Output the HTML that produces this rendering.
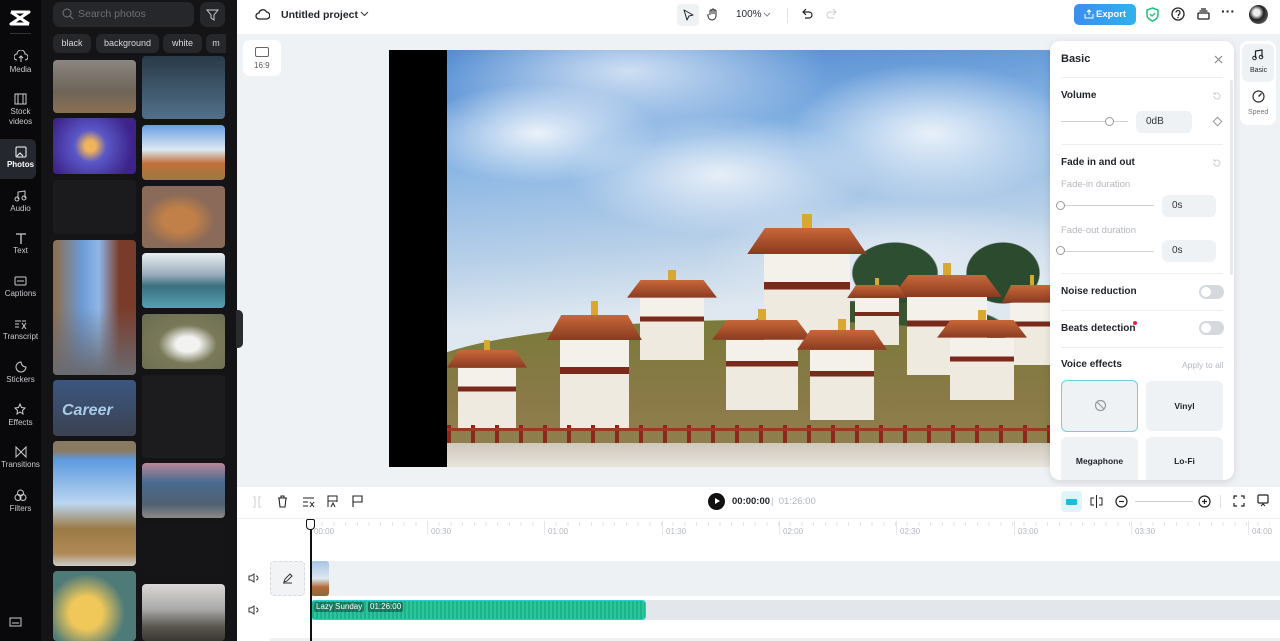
<!DOCTYPE html>
<html><head><meta charset="utf-8"><style>
*{box-sizing:border-box;margin:0;padding:0}
body{width:1280px;height:641px;overflow:hidden;font-family:"Liberation Sans",sans-serif;background:#eff2f5;position:relative;font-size:12px;color:#1f2329}
.abs{position:absolute}
.side{left:0;top:0;width:41px;height:641px;background:#09090b}
.nav{position:absolute;left:0;width:41px;text-align:center;color:#c9cbd0;font-size:8px;line-height:10px}
.nav svg{display:block;margin:0 auto 2px}
.panel{left:41px;top:0;width:196px;height:641px;background:#141417}
.th{position:absolute;border-radius:4px}
.chip{position:absolute;top:34px;height:19px;background:#26272b;border-radius:6px;color:#d8d9dc;font-size:9px;line-height:19px;text-align:center}
.top{left:237px;top:0;width:1043px;height:34px;background:#fff}
.tl{left:237px;top:487px;width:1043px;height:154px;background:#fff}
.pn{left:1050px;top:41px;width:184px;height:439px;background:#fff;border-radius:10px;box-shadow:0 2px 8px rgba(0,0,0,.12)}
.lbl{position:absolute;font-size:10px;font-weight:bold;color:#1f2329}
.sub{position:absolute;font-size:9.5px;color:#b3b7bd}
.inp{position:absolute;background:#eff2f5;border-radius:6px;font-size:10px;line-height:22px;padding-left:10px;color:#333}
.hr{position:absolute;left:11px;width:162px;height:1px;background:#eceef1}
.tg{position:absolute;left:149px;width:25px;height:14px;border-radius:7px;background:#d5d9de}
.tg:after{content:"";position:absolute;left:2px;top:2px;width:10px;height:10px;border-radius:50%;background:#fff}
.card{position:absolute;width:77px;background:#eff2f5;border-radius:6px;font-size:8.5px;font-weight:bold;text-align:center}
.rl{position:absolute;top:527px;font-size:8px;color:#b3b7bd}
.tick{position:absolute;top:521px;width:1px;height:14px;background:#e4e6ea}
.st{position:absolute}
.st .r{position:absolute;left:0;top:0;width:100%;height:22%;background:linear-gradient(#c8683a,#8a3a20);clip-path:polygon(15% 0,85% 0,100% 100%,0 100%)}
.st .b{position:absolute;left:14%;top:22%;width:72%;height:78%;background:linear-gradient(#f4f1ea 0 30%,#7a2a1a 30% 38%,#eeeae0 38%)}
.st .g{position:absolute;left:46%;top:-12%;width:8%;height:12%;background:#d8a830}
</style></head><body>
<div class="abs side"></div>
<svg class="abs" style="left:8px;top:8px" width="24" height="20" viewBox="0 0 24 20"><path d="M3 4h18L3 16h18M3 4l18 12" stroke="#fff" stroke-width="3" fill="none" stroke-linejoin="round"/></svg>
<div class="abs" style="left:10px;top:33px;width:21px;height:1px;background:#333"></div>
<div class="nav" style="top:50px"><svg width="14" height="13" viewBox="0 0 14 13"><path d="M3 10a3 3 0 0 1 0-6 4 4 0 0 1 8 0 3 3 0 0 1 0 6M7 6v6M5 8l2-2 2 2" stroke="#ccc" fill="none"/></svg>Media</div>
<div class="nav" style="top:93px"><svg width="13" height="12"><rect x="1" y="1" width="11" height="10" stroke="#ccc" fill="none"/><path d="M4 1v10M9 1v10" stroke="#ccc"/></svg>Stock<br>videos</div>
<div class="abs" style="left:0;top:139px;width:36px;height:40px;background:#24272d;border-radius:0 6px 6px 0"></div>
<div class="nav" style="top:146px;color:#fff;font-weight:bold"><svg width="12" height="12"><rect x="1" y="1" width="10" height="10" rx="1" stroke="#fff" fill="none"/><path d="M2 10l3-3 3 3" stroke="#fff" fill="none"/></svg>Photos</div>
<div class="nav" style="top:189px"><svg width="13" height="13"><path d="M4 10V3l7-1v7" stroke="#ccc" fill="none"/><circle cx="3" cy="10" r="2" stroke="#ccc" fill="none"/><circle cx="10" cy="9" r="2" stroke="#ccc" fill="none"/></svg>Audio</div>
<div class="nav" style="top:232px"><svg width="12" height="12"><path d="M1 2h10M6 2v10" stroke="#ccc" stroke-width="1.3"/></svg>Text</div>
<div class="nav" style="top:275px"><svg width="13" height="12"><rect x="1" y="2" width="11" height="8" rx="1" stroke="#ccc" fill="none"/><path d="M3 6h7" stroke="#ccc"/></svg>Captions</div>
<div class="nav" style="top:318px"><svg width="13" height="12"><path d="M1 3h6M1 6h4M1 9h4M8 3h4M8 5l4 6M12 5l-4 6" stroke="#ccc" fill="none"/></svg>Transcript</div>
<div class="nav" style="top:361px"><svg width="12" height="12"><path d="M6 1a5 5 0 1 0 5 5 5 5 0 0 1-5-5z" stroke="#ccc" fill="none"/></svg>Stickers</div>
<div class="nav" style="top:403px"><svg width="13" height="13"><path d="M6 1l1.5 3.5L11 5 8.5 7.5 9 11 6 9 3 11l.5-3.5L1 5l3.5-.5z" stroke="#ccc" fill="none"/></svg>Effects</div>
<div class="nav" style="top:446px"><svg width="12" height="12"><path d="M1 1v10l10-10v10z" stroke="#ccc" fill="none"/></svg>Transitions</div>
<div class="nav" style="top:489px"><svg width="13" height="13"><circle cx="6.5" cy="4" r="3" stroke="#ccc" fill="none"/><circle cx="4" cy="8.5" r="3" stroke="#ccc" fill="none"/><circle cx="9" cy="8.5" r="3" stroke="#ccc" fill="none"/></svg>Filters</div>
<svg class="abs" style="left:9px;top:617px" width="13" height="11"><rect x="1" y="1" width="11" height="8" stroke="#ccc" fill="none"/><path d="M3 6h7" stroke="#ccc"/></svg>

<div class="abs panel"></div>
<div class="abs" style="left:53px;top:2px;width:141px;height:25px;background:#26272b;border-radius:7px;color:#6e7076;font-size:10.5px;line-height:25px;padding-left:25px">Search photos</div>
<svg class="abs" style="left:62px;top:8px" width="12" height="12"><circle cx="5" cy="5" r="4" stroke="#777" fill="none"/><path d="M8 8l3 3" stroke="#777"/></svg>
<div class="abs" style="left:200px;top:2px;width:25px;height:25px;background:#26272b;border-radius:7px"></div>
<svg class="abs" style="left:206px;top:8px" width="13" height="13"><path d="M1 2h11L8 7v5L5 10V7z" stroke="#ccc" fill="none"/></svg>
<div class="chip" style="left:53px;width:38px">black</div>
<div class="chip" style="left:96px;width:63px">background</div>
<div class="chip" style="left:163px;width:39px">white</div>
<div class="chip" style="left:206px;width:20px;border-radius:6px 0 0 6px">m</div>
<div class="th" style="left:53px;top:60px;width:83px;height:53px;background:linear-gradient(#8a8681,#6f6458 60%,#8c6f52)"></div>
<div class="th" style="left:53px;top:118px;width:83px;height:56px;background:radial-gradient(circle at 45% 50%,#f0b45a 0 10%,#5a58c8 30%,#3d238a 80%)"></div>
<div class="th" style="left:53px;top:180px;width:83px;height:54px;background:#1b1b1d"></div>
<div class="th" style="left:53px;top:240px;width:83px;height:135px;background:linear-gradient(90deg,#8e6c4a,#6b9ad6 35%,#8fb8e8 55%,#7a3c2a 80%),#777"></div>
<div class="th" style="left:53px;top:240px;width:83px;height:135px;background:linear-gradient(transparent 50%,#6a6a70 100%)"></div>
<div class="th" style="left:53px;top:380px;width:83px;height:56px;background:linear-gradient(#3b5680,#3b4250)"></div>
<div class="abs" style="left:62px;top:402px;color:#a8cbe8;font-size:16px;font-weight:bold;font-style:italic">Career</div>
<div class="th" style="left:53px;top:441px;width:83px;height:125px;background:linear-gradient(#8a7a62 0 8%,#5c9ae0 15%,#bcd6f0 50%,#9a7a46 70%,#b08a56 90%,#ccc)"></div>
<div class="th" style="left:53px;top:571px;width:83px;height:70px;background:radial-gradient(circle at 40% 60%,#f0c85a 0 25%,#4e7a78 60%)"></div>
<div class="th" style="left:142px;top:56px;width:83px;height:63px;background:linear-gradient(#2a3a48,#52708a)"></div>
<div class="th" style="left:142px;top:125px;width:83px;height:55px;background:linear-gradient(#6aa0e0,#dce8f2 45%,#c0703a 70%,#9a7a40)"></div>
<div class="th" style="left:142px;top:186px;width:83px;height:62px;background:radial-gradient(ellipse at 45% 55%,#c08048 0 25%,#8a6a58 55%)"></div>
<div class="th" style="left:142px;top:253px;width:83px;height:55px;background:linear-gradient(#e8eef2,#9ab 40%,#3a7080 60%,#55a0b0)"></div>
<div class="th" style="left:142px;top:314px;width:83px;height:55px;background:radial-gradient(ellipse at 55% 55%,#f2f2f0 0 18%,#7a7a5a 45%,#6a6a50)"></div>
<div class="th" style="left:142px;top:375px;width:83px;height:83px;background:#1c1c1f"></div>
<div class="th" style="left:142px;top:463px;width:83px;height:55px;background:linear-gradient(#b8889a,#4a6a90 35%,#506070 75%,#8a8a8a)"></div>
<div class="th" style="left:142px;top:524px;width:83px;height:54px;background:#151517"></div>
<div class="th" style="left:142px;top:584px;width:83px;height:57px;background:linear-gradient(#dad9d6,#a8a8a6 45%,#5a5650 75%,#3a3632)"></div>
<div class="abs" style="left:236px;top:310px;width:7px;height:38px;background:#2a2b30;border-radius:0 5px 5px 0"></div>

<div class="abs top"></div>
<svg class="abs" style="left:255px;top:8px" width="15" height="14"><path d="M4 11a3 3 0 0 1 0-6 4 4 0 0 1 7.5-1A3.5 3.5 0 0 1 11 11z" stroke="#222" stroke-width="1.3" fill="none"/></svg>
<div class="abs" style="left:281px;top:9px;font-size:10.5px;font-weight:bold">Untitled project</div>
<svg class="abs" style="left:360px;top:11px" width="9" height="6"><path d="M1 1l3.5 3.5L8 1" stroke="#333" fill="none"/></svg>
<div class="abs" style="left:677px;top:4px;width:22px;height:22px;background:#eff2f5;border-radius:4px"></div>
<svg class="abs" style="left:683px;top:9px" width="11" height="12"><path d="M1 1l9 5-4 1-2 4z" stroke="#222" fill="none" stroke-linejoin="round"/></svg>
<svg class="abs" style="left:707px;top:8px" width="12" height="13"><path d="M3 7V3a1 1 0 0 1 2 0v3V2a1 1 0 0 1 2 0v4V3a1 1 0 0 1 2 0v5a4 4 0 0 1-8 0V6" stroke="#222" fill="none"/></svg>
<div class="abs" style="left:736px;top:9px;font-size:10px">100%</div>
<svg class="abs" style="left:763px;top:12px" width="8" height="5"><path d="M1 1l3 3 3-3" stroke="#888" fill="none"/></svg>
<div class="abs" style="left:787px;top:8px;width:1px;height:15px;background:#e0e2e6"></div>
<svg class="abs" style="left:801px;top:8px" width="12" height="12"><path d="M3 4h5a3 3 0 0 1 0 6H4M5 1L2 4l3 3" stroke="#222" fill="none" stroke-width="1.2"/></svg>
<svg class="abs" style="left:826px;top:8px" width="12" height="12"><path d="M9 4H4a3 3 0 0 0 0 6h4M7 1l3 3-3 3" stroke="#ccc" fill="none"/></svg>
<div class="abs" style="left:1074px;top:4px;width:62px;height:21px;background:linear-gradient(90deg,#3a8ef0,#30b2ec);border-radius:5px;color:#fff;font-size:9.5px;font-weight:bold;line-height:21px;padding-left:22px">Export</div>
<svg class="abs" style="left:1084px;top:9px" width="10" height="10"><path d="M1 5v4h8V5M5 1v5M3 3l2-2 2 2" stroke="#fff" fill="none"/></svg>
<svg class="abs" style="left:1146px;top:7px" width="13" height="15"><path d="M6.5 1L12 3v5c0 3-3 5-5.5 6C4 13 1 11 1 8V3z" stroke="#1fc27a" stroke-width="1.5" fill="none"/><path d="M4 7l2 2 3-3" stroke="#1fc27a" stroke-width="1.3" fill="none"/></svg>
<svg class="abs" style="left:1171px;top:7px" width="14" height="14"><circle cx="7" cy="7" r="6" stroke="#222" stroke-width="1.3" fill="none"/><path d="M5 5.5a2 2 0 1 1 2.5 2V9" stroke="#222" stroke-width="1.2" fill="none"/><circle cx="7" cy="10.5" r=".8" fill="#222"/></svg>
<svg class="abs" style="left:1197px;top:8px" width="13" height="12"><rect x="1" y="5" width="11" height="6" rx="1" stroke="#222" stroke-width="1.3" fill="none"/><path d="M2.5 3h8M4 1h5" stroke="#222" stroke-width="1.3"/></svg>
<div class="abs" style="left:1221px;top:3px;font-size:14px;font-weight:bold">···</div>
<div class="abs" style="left:1249px;top:5px;width:19px;height:19px;border-radius:50%;background:radial-gradient(circle at 40% 40%,#eee 0 20%,#222 45%,#888)"></div>

<div class="abs" style="left:243px;top:40px;width:38px;height:36px;background:#fff;border-radius:7px"></div>
<div class="abs" style="left:255px;top:47px;width:14px;height:10px;border:1.2px solid #666;border-radius:2px"></div>
<div class="abs" style="left:254px;top:61px;font-size:8px;color:#555">16:9</div>

<div class="abs" style="left:389px;top:50px;width:58px;height:417px;background:#000"></div>
<div class="abs" style="left:447px;top:50px;width:605px;height:417px;background:linear-gradient(175deg,#4a86d0 0%,#8ab6e4 25%,#b6cfe8 45%,#dfe8f0 60%);overflow:hidden">
 <div class="abs" style="left:0;top:0;width:605px;height:417px;background:radial-gradient(ellipse 120px 50px at 15% 20%,rgba(255,255,255,.85),transparent),radial-gradient(ellipse 150px 60px at 45% 30%,rgba(240,244,250,.9),transparent),radial-gradient(ellipse 140px 70px at 80% 20%,rgba(255,255,255,.8),transparent),radial-gradient(ellipse 200px 70px at 30% 5%,rgba(255,255,255,.7),transparent),radial-gradient(ellipse 200px 60px at 75% 50%,rgba(230,236,244,.9),transparent)"></div>
 <div class="abs" style="left:250px;top:160px;width:360px;height:140px;background:radial-gradient(ellipse 50px 45px at 30% 40%,#2a4a30 60%,transparent 62%),radial-gradient(ellipse 70px 50px at 55% 45%,#2e4e32 60%,transparent 62%),radial-gradient(ellipse 60px 50px at 85% 45%,#2c4a2e 60%,transparent 62%),radial-gradient(ellipse 180px 40px at 50% 85%,#3a5432 70%,transparent 72%)"></div>
 <div class="abs" style="left:-40px;top:270px;width:700px;height:200px;border-radius:50% 50% 0 0/30% 30% 0 0;background:linear-gradient(#7a7a3a,#8a7a48 40%,#9a8858)"></div>
 <div class="st" style="left:300px;top:178px;width:120px;height:120px"><div class="g"></div><div class="r"></div><div class="b"></div></div>
 <div class="st" style="left:180px;top:230px;width:90px;height:80px"><div class="g"></div><div class="r"></div><div class="b"></div></div>
 <div class="st" style="left:100px;top:265px;width:95px;height:115px"><div class="g"></div><div class="r"></div><div class="b"></div></div>
 <div class="st" style="left:265px;top:270px;width:100px;height:90px"><div class="g"></div><div class="r"></div><div class="b"></div></div>
 <div class="st" style="left:445px;top:225px;width:110px;height:100px"><div class="g"></div><div class="r"></div><div class="b"></div></div>
 <div class="st" style="left:400px;top:235px;width:60px;height:60px"><div class="g"></div><div class="r"></div><div class="b"></div></div>
 <div class="st" style="left:555px;top:235px;width:60px;height:80px"><div class="g"></div><div class="r"></div><div class="b"></div></div>
 <div class="st" style="left:0;top:300px;width:80px;height:80px"><div class="g"></div><div class="r"></div><div class="b"></div></div>
 <div class="st" style="left:350px;top:280px;width:90px;height:90px"><div class="g"></div><div class="r"></div><div class="b"></div></div>
 <div class="st" style="left:490px;top:270px;width:90px;height:80px"><div class="g"></div><div class="r"></div><div class="b"></div></div>
 <div class="abs" style="left:0;top:375px;width:605px;height:20px;background:repeating-linear-gradient(90deg,#8a2a1a 0 4px,transparent 4px 24px)"></div>
 <div class="abs" style="left:0;top:378px;width:605px;height:3px;background:#9a3a22"></div>
 <div class="abs" style="left:0;top:393px;width:605px;height:24px;background:linear-gradient(#cfc8bc,#e8e4dc)"></div>
</div>

<div class="abs pn"></div>
<div class="lbl" style="left:1061px;top:53px;font-size:11px">Basic</div>
<svg class="abs" style="left:1214px;top:55px" width="9" height="9"><path d="M1 1l7 7M8 1L1 8" stroke="#888" stroke-width="1.2"/></svg>
<div class="hr" style="left:1061px;top:77px"></div>
<div class="lbl" style="left:1061px;top:90px">Volume</div>
<svg class="abs" style="left:1212px;top:91px" width="10" height="10"><path d="M2 5a3 3 0 1 0 1-2.2M2 1v2h2" stroke="#ccc" fill="none"/></svg>
<div class="abs" style="left:1061px;top:121px;width:67px;height:1px;background:#cfd3d8"></div>
<div class="abs" style="left:1105px;top:117px;width:9px;height:9px;border-radius:50%;background:#fff;border:1px solid #999"></div>
<div class="inp" style="left:1136px;top:111px;width:56px">0dB</div>
<div class="abs" style="left:1214px;top:118px;width:7px;height:7px;border:1px solid #999;transform:rotate(45deg)"></div>
<div class="hr" style="left:1061px;top:144px"></div>
<div class="lbl" style="left:1061px;top:157px">Fade in and out</div>
<svg class="abs" style="left:1212px;top:158px" width="10" height="10"><path d="M2 5a3 3 0 1 0 1-2.2M2 1v2h2" stroke="#ccc" fill="none"/></svg>
<div class="sub" style="left:1061px;top:179px">Fade-in duration</div>
<div class="abs" style="left:1061px;top:205px;width:93px;height:1px;background:#cfd3d8"></div>
<div class="abs" style="left:1056px;top:201px;width:9px;height:9px;border-radius:50%;background:#fff;border:1px solid #999"></div>
<div class="inp" style="left:1162px;top:195px;width:54px">0s</div>
<div class="sub" style="left:1061px;top:225px">Fade-out duration</div>
<div class="abs" style="left:1061px;top:251px;width:93px;height:1px;background:#cfd3d8"></div>
<div class="abs" style="left:1056px;top:246px;width:9px;height:9px;border-radius:50%;background:#fff;border:1px solid #999"></div>
<div class="inp" style="left:1162px;top:240px;width:54px">0s</div>
<div class="abs" style="left:1230px;top:80px;width:3px;height:195px;background:#e8eaed;border-radius:2px"></div>
<div class="hr" style="left:1061px;top:273px"></div>
<div class="lbl" style="left:1061px;top:286px">Noise reduction</div>
<div class="tg" style="left:1199px;top:285px"></div>
<div class="hr" style="left:1061px;top:310px"></div>
<div class="lbl" style="left:1061px;top:323px">Beats detection</div>
<div class="abs" style="left:1133px;top:321px;width:4px;height:4px;border-radius:50%;background:#f0243c"></div>
<div class="tg" style="left:1199px;top:321px"></div>
<div class="hr" style="left:1061px;top:347px"></div>
<div class="lbl" style="left:1061px;top:359px">Voice effects</div>
<div class="sub" style="left:1182px;top:360px;font-size:8.5px">Apply to all</div>
<div class="card" style="left:1061px;top:380px;height:52px;border:1px solid #6ad4da"></div>
<svg class="abs" style="left:1094px;top:399px" width="13" height="13"><circle cx="6.5" cy="6.5" r="5" stroke="#999" fill="none" stroke-width="1.2"/><path d="M3 3l7 7" stroke="#999" stroke-width="1.2"/></svg>
<div class="card" style="left:1146px;top:381px;height:50px;line-height:50px">Vinyl</div>
<div class="card" style="left:1061px;top:437px;height:43px;line-height:48px;border-radius:6px 6px 0 0">Megaphone</div>
<div class="card" style="left:1146px;top:437px;height:43px;line-height:48px;border-radius:6px 6px 0 0">Lo-Fi</div>

<div class="abs" style="left:1240px;top:41px;width:36px;height:84px;background:#fff;border-radius:8px"></div>
<div class="abs" style="left:1242px;top:44px;width:32px;height:38px;background:#eff2f5;border-radius:6px"></div>
<svg class="abs" style="left:1252px;top:48px" width="12" height="13"><path d="M3.5 10V3L10 2v7" stroke="#222" stroke-width="1.2" fill="none"/><circle cx="2.5" cy="10" r="1.8" stroke="#222" fill="none"/><circle cx="9" cy="9" r="1.8" stroke="#222" fill="none"/></svg>
<div class="abs" style="left:1250px;top:67px;font-size:7px">Basic</div>
<svg class="abs" style="left:1252px;top:90px" width="13" height="13"><circle cx="6.5" cy="6.5" r="5.5" stroke="#333" fill="none" stroke-width="1.2"/><path d="M6.5 6.5l3-3" stroke="#333" stroke-width="1.4"/></svg>
<div class="abs" style="left:1248px;top:109px;font-size:7px;color:#777">Speed</div>

<div class="abs tl"></div>
<div class="abs" style="left:237px;top:518px;width:1043px;height:1px;background:#eef0f2"></div>
<svg class="abs" style="left:252px;top:496px" width="10" height="12"><path d="M1 1h2v10H1M9 1H7v10h2" stroke="#ccc" fill="none"/></svg>
<svg class="abs" style="left:277px;top:495px" width="11" height="13"><path d="M1 3h9M4 3V1h3v2M2 3l1 9h5l1-9" stroke="#222" fill="none" stroke-width="1.1"/></svg>
<svg class="abs" style="left:302px;top:496px" width="13" height="12"><path d="M1 2h11M1 6h5M1 10h5M8 6l4 5M12 6l-4 5" stroke="#222" fill="none"/></svg>
<svg class="abs" style="left:327px;top:495px" width="11" height="13"><path d="M1 12V1h9v6M1 6h9M4 12l2-4 2 4" stroke="#222" fill="none"/></svg>
<svg class="abs" style="left:352px;top:495px" width="11" height="13"><path d="M1 12V1h9v6H1" stroke="#222" fill="none" stroke-width="1.1"/></svg>
<div class="abs" style="left:708px;top:493px;width:17px;height:17px;border-radius:50%;background:#111"></div>
<div class="abs" style="left:715px;top:498px;width:0;height:0;border-left:5px solid #fff;border-top:3.5px solid transparent;border-bottom:3.5px solid transparent"></div>
<div class="abs" style="left:732px;top:496px;font-size:9.5px;font-weight:bold">00:00:00</div>
<div class="abs" style="left:771px;top:496px;font-size:9.5px;color:#b0b4ba">| &nbsp;01:26:00</div>
<div class="abs" style="left:1061px;top:491px;width:21px;height:21px;background:#dff5f9;border-radius:4px"></div>
<div class="abs" style="left:1066px;top:499px;width:11px;height:6px;background:#1dbcd8;border-radius:1px"></div>
<svg class="abs" style="left:1090px;top:495px" width="13" height="13"><path d="M6.5 0v13M4 3H1v7h3M9 3h3v7H9" stroke="#222" fill="none"/></svg>
<svg class="abs" style="left:1115px;top:495px" width="13" height="13"><circle cx="6.5" cy="6.5" r="5.5" stroke="#222" fill="none" stroke-width="1.2"/><path d="M4 6.5h5" stroke="#222" stroke-width="1.2"/></svg>
<div class="abs" style="left:1135px;top:501px;width:58px;height:1px;background:#cfd3d8"></div>
<svg class="abs" style="left:1198px;top:495px" width="13" height="13"><circle cx="6.5" cy="6.5" r="5.5" stroke="#222" fill="none" stroke-width="1.2"/><path d="M4 6.5h5M6.5 4v5" stroke="#222" stroke-width="1.2"/></svg>
<div class="abs" style="left:1220px;top:495px;width:1px;height:13px;background:#e0e2e6"></div>
<svg class="abs" style="left:1233px;top:495px" width="12" height="12"><path d="M1 4V1h3M8 1h3v3M11 8v3H8M4 11H1V8" stroke="#222" fill="none" stroke-width="1.2"/></svg>
<svg class="abs" style="left:1257px;top:494px" width="12" height="13"><rect x="1" y="1" width="10" height="8" rx="1" stroke="#222" fill="none" stroke-width="1.2"/><path d="M4 12l2-2 2 2" stroke="#222" fill="none"/></svg>

<div class="tick" style="left:427px"></div><div class="tick" style="left:544px"></div><div class="tick" style="left:662px"></div><div class="tick" style="left:779px"></div><div class="tick" style="left:896px"></div><div class="tick" style="left:1014px"></div><div class="tick" style="left:1131px"></div><div class="tick" style="left:1248px"></div>
<div class="abs" style="left:310px;top:522px;width:960px;height:4px;background:repeating-linear-gradient(90deg,#e4e6ea 0 1px,transparent 1px 11.7px)"></div>
<div class="rl" style="left:314px">00:00</div><div class="rl" style="left:431px">00:30</div><div class="rl" style="left:548px">01:00</div><div class="rl" style="left:666px">01:30</div><div class="rl" style="left:783px">02:00</div><div class="rl" style="left:900px">02:30</div><div class="rl" style="left:1018px">03:00</div><div class="rl" style="left:1135px">03:30</div><div class="rl" style="left:1252px">04:00</div>

<div class="abs" style="left:310px;top:561px;width:970px;height:35px;background:#eef1f4"></div>
<div class="abs" style="left:270px;top:561px;width:35px;height:35px;border:1px dashed #d4d8dd;border-radius:4px;background:#f1f3f5"></div>
<svg class="abs" style="left:282px;top:573px" width="11" height="11"><path d="M2 9l1-3 5-5 2 2-5 5zM1 10h9" stroke="#333" fill="none"/></svg>
<div class="abs" style="left:311px;top:561px;width:18px;height:35px;border-radius:3px;background:linear-gradient(#a8c4e4,#dde8f0 50%,#b06a38 75%,#8a6a40)"></div>
<svg class="abs" style="left:248px;top:573px" width="11" height="10"><path d="M1 3h2l3-2v8L3 7H1zM8 3a2 2 0 0 1 0 4" stroke="#333" fill="none"/></svg>
<svg class="abs" style="left:248px;top:605px" width="11" height="10"><path d="M1 3h2l3-2v8L3 7H1zM8 3a2 2 0 0 1 0 4" stroke="#333" fill="none"/></svg>
<div class="abs" style="left:310px;top:600px;width:970px;height:20px;background:#e3e6ea"></div>
<div class="abs" style="left:311px;top:600px;width:335px;height:20px;background:repeating-linear-gradient(90deg,#19b48a 0 2px,#2ec49a 2px 4px);border:1.5px solid #28cdd4;border-radius:4px"></div>
<div class="abs" style="left:314px;top:602px;height:10px;padding:0 2px;background:rgba(0,0,0,.35);color:#fff;font-size:8px;line-height:10px;border-radius:2px">Lazy Sunday</div>
<div class="abs" style="left:368px;top:602px;height:10px;padding:0 2px;background:rgba(0,0,0,.35);color:#fff;font-size:8px;line-height:10px;border-radius:2px">01:26:00</div>
<div class="abs" style="left:270px;top:638px;width:1010px;height:3px;background:#eef0f2"></div>
<div class="abs" style="left:310px;top:526px;width:1.5px;height:115px;background:#111"></div>
<div class="abs" style="left:306px;top:519px;width:9px;height:11px;border:1.5px solid #111;border-radius:2px 2px 4px 4px;background:#fff"></div>
</body></html>
